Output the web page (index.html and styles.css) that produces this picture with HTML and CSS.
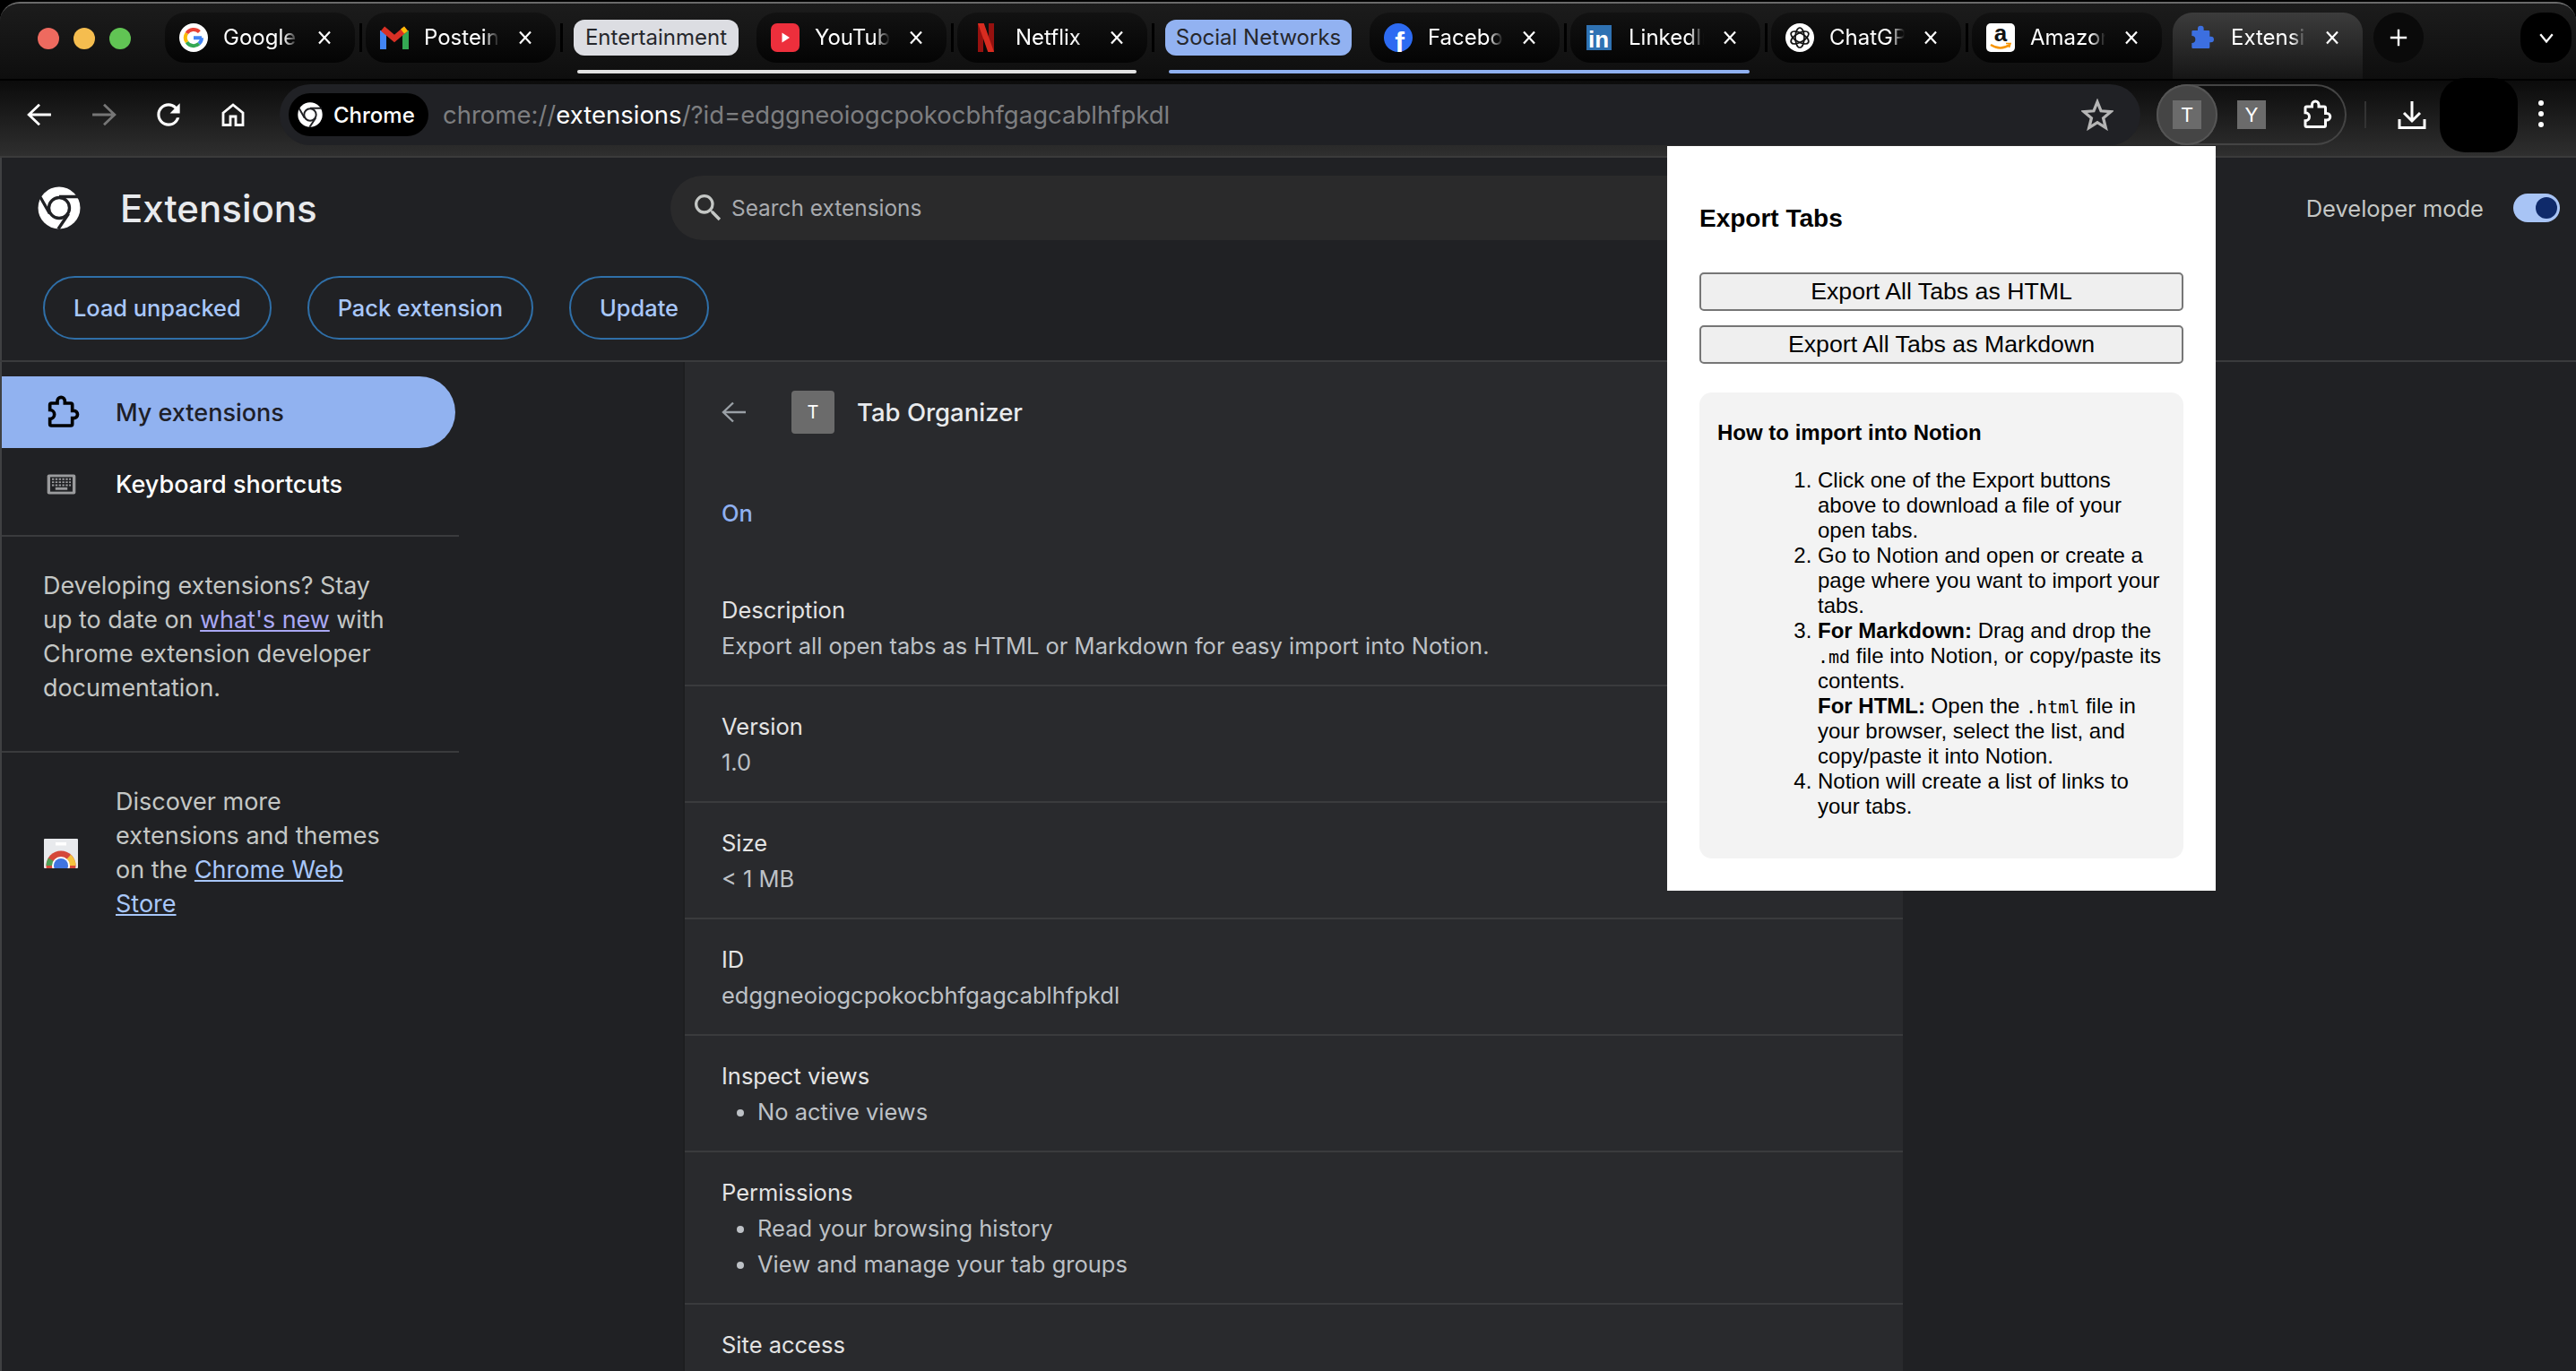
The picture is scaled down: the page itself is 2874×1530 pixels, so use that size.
FILE: index.html
```html
<!DOCTYPE html>
<html>
<head>
    <meta charset="utf-8">
    <title>Extensions</title>
    <link rel="stylesheet" href="styles.css">
</head>
<body>

<!-- shared icons -->
<svg class="sprite">
    <symbol id="i-x" viewBox="0 0 16 16"><path d="M2 1.5 14 14.5M14 1.5 2 14.5" fill="none" stroke="currentColor" stroke-width="2.2"/></symbol>
    <symbol id="i-puzzle" viewBox="0 0 24 24"><path d="M5 6H9V4.5a2.5 2.5 0 0 1 5 0V6h4a1 1 0 0 1 1 1v4h1a2.5 2.5 0 0 1 0 5h-1v4a1 1 0 0 1-1 1H5a1 1 0 0 1-1-1v-3.5a3 3 0 0 0 0-6V7a1 1 0 0 1 1-1z"/></symbol>
    <symbol id="i-chrome" viewBox="0 0 48 48">
        <circle cx="24" cy="24" r="23.5" fill="#fff"/>
        <circle cx="24" cy="24" r="11.5" fill="#fff" stroke="#202124" stroke-width="3.4"/>
        <path d="M24 11.5H46M13.5 30.5 3 12M34.5 30.5 23 47.5" fill="none" stroke="#202124" stroke-width="3.4"/>
    </symbol>
</svg>

<div class="window">

    <!-- TAB STRIP -->
    <div class="tabstrip">
        <div class="lights">
            <span class="light red"></span><span class="light yellow"></span><span class="light green"></span>
        </div>

        <div class="tab">
            <svg class="favicon" viewBox="0 0 32 32">
                <circle cx="16" cy="16" r="16" fill="#fff"/>
                <path d="M16 16.2H25" stroke="#4285f4" stroke-width="4" fill="none"/>
                <path d="M25 16.2a9 9 0 0 1-3 6.6" stroke="#4285f4" stroke-width="4" fill="none"/>
                <path d="M22 22.8A9 9 0 0 1 8.4 21" stroke="#34a853" stroke-width="4" fill="none"/>
                <path d="M8.4 21a9 9 0 0 1 0-10" stroke="#fbbc05" stroke-width="4" fill="none"/>
                <path d="M8.4 11A9 9 0 0 1 22.4 9.6" stroke="#ea4335" stroke-width="4" fill="none"/>
            </svg>
            <span class="tab-title">Google</span>
            <svg class="close"><use href="#i-x"/></svg>
        </div>
        <div class="sep"></div>
        <div class="tab">
            <svg class="favicon" viewBox="0 0 32 32">
                <path d="M3.5 29V8" stroke="#4285f4" stroke-width="7" fill="none"/>
                <path d="M28.5 29V8" stroke="#34a853" stroke-width="7" fill="none"/>
                <path d="M3 6 16 17 29 6" stroke="#d93025" stroke-width="6.5" fill="none"/>
                <path d="M25 9 29 6" stroke="#fbbc05" stroke-width="6.5" fill="none"/>
            </svg>
            <span class="tab-title">Posteingang</span>
            <svg class="close"><use href="#i-x"/></svg>
        </div>
        <div class="sep"></div>

        <!-- group: Entertainment -->
        <div class="group group-white">
            <div class="chip chip-white">Entertainment</div>
            <div class="tab">
                <svg class="favicon" viewBox="0 0 32 32">
                    <rect width="32" height="32" rx="7" fill="#ed2f3c"/>
                    <path d="M12.500 10.500 21 16l-8.500 5.500z" fill="#fff"/>
                </svg>
                <span class="tab-title">YouTube</span>
                <svg class="close"><use href="#i-x"/></svg>
            </div>
            <div class="sep"></div>
            <div class="tab">
                <svg class="favicon" viewBox="0 0 32 32">
                    <rect x="7" width="6" height="32" fill="#96110f"/>
                    <rect x="19" width="6" height="32" fill="#96110f"/>
                    <line x1="10" y1="-1" x2="22" y2="33" stroke="#d92c20" stroke-width="6.400"/>
                </svg>
                <span class="tab-title">Netflix</span>
                <svg class="close"><use href="#i-x"/></svg>
            </div>
            <div class="sep"></div>
        </div>

        <!-- group: Social Networks -->
        <div class="group group-blue">
            <div class="chip chip-blue">Social Networks</div>
            <div class="tab">
                <svg class="favicon" viewBox="0 0 32 32">
                    <circle cx="16" cy="16" r="16" fill="#2d6bf2"/>
                    <text x="17.500" y="32" class="fb-f">f</text>
                </svg>
                <span class="tab-title">Facebook</span>
                <svg class="close"><use href="#i-x"/></svg>
            </div>
            <div class="sep"></div>
            <div class="tab">
                <svg class="favicon" viewBox="0 0 32 32">
                    <rect x="2" y="2" width="28" height="28" fill="#2f72b3"/>
                    <text x="15.500" y="27" class="li-in">in</text>
                </svg>
                <span class="tab-title">LinkedIn</span>
                <svg class="close"><use href="#i-x"/></svg>
            </div>
            <div class="sep"></div>
        </div>

        <div class="tab">
            <svg class="favicon" viewBox="0 0 32 32">
                <circle cx="16" cy="16" r="16" fill="#fff"/>
                <g fill="none" stroke="#111" stroke-width="1.700">
                    <ellipse cx="16" cy="16" rx="5" ry="11"/>
                    <ellipse cx="16" cy="16" rx="5" ry="11" transform="rotate(60 16 16)"/>
                    <ellipse cx="16" cy="16" rx="5" ry="11" transform="rotate(120 16 16)"/>
                </g>
            </svg>
            <span class="tab-title">ChatGPT</span>
            <svg class="close"><use href="#i-x"/></svg>
        </div>
        <div class="sep"></div>
        <div class="tab">
            <svg class="favicon" viewBox="0 0 32 32">
                <rect width="32" height="32" rx="5" fill="#fff"/>
                <text x="16" y="20" class="amz-a">a</text>
                <path d="M5 24q11 7 21 0" fill="none" stroke="#f79400" stroke-width="2.400"/>
                <path d="M22 22.500 27 22.500 25.500 27" fill="none" stroke="#f79400" stroke-width="1.600"/>
            </svg>
            <span class="tab-title">Amazon</span>
            <svg class="close"><use href="#i-x"/></svg>
        </div>

        <div class="tab tab-active">
            <svg class="favicon favicon-puzzle" viewBox="0 0 24 24"><use href="#i-puzzle"/></svg>
            <span class="tab-title">Extensions</span>
            <svg class="close"><use href="#i-x"/></svg>
        </div>

        <div class="newtab">
            <svg viewBox="0 0 24 24"><path d="M12 2V22M2 12H22" stroke="#fff" stroke-width="2.600" fill="none"/></svg>
        </div>
        <div class="tabsearch">
            <svg viewBox="0 0 24 24"><path d="M3 7 12 18 21 7" stroke="#fff" stroke-width="3" fill="none"/></svg>
        </div>
    </div>

    <!-- TOOLBAR -->
    <div class="toolbar">
        <div class="navbtn">
            <svg viewBox="0 0 26 24"><path d="M25 12H3M13 1.500 2 12 13 22.500" fill="none" stroke="#fff" stroke-width="2.600"/></svg>
        </div>
        <div class="navbtn">
            <svg viewBox="0 0 26 24"><path d="M1 12H23M13 1.500 24 12 13 22.500" fill="none" stroke="#767676" stroke-width="2.600"/></svg>
        </div>
        <div class="navbtn">
            <svg class="reload" viewBox="0 0 24 24"><path fill="#fff" d="M17.650 6.350A7.958 7.958 0 0 0 12 4c-4.420 0-7.990 3.580-7.990 8s3.570 8 7.990 8c3.730 0 6.840-2.550 7.730-6h-2.080A5.990 5.990 0 0 1 12 18c-3.310 0-6-2.690-6-6s2.690-6 6-6c1.660 0 3.140.690 4.220 1.780L13 11h7V4l-2.350 2.350z"/></svg>
        </div>
        <div class="navbtn">
            <svg viewBox="0 0 26 26"><path d="M2 11 13 2 24 11V24.500H16V15H10V24.500H2Z" fill="none" stroke="#fff" stroke-width="2.800"/></svg>
        </div>

        <div class="omnibox">
            <div class="chrome-chip">
                <svg viewBox="0 0 48 48"><use href="#i-chrome"/></svg>
                <span>Chrome</span>
            </div>
            <div class="url">chrome://<span class="url-host">extensions</span>/?id=edggneoiogcpokocbhfgagcablhfpkdl</div>
            <svg class="star" viewBox="0 0 24 24"><path d="M12 2.500 14.700 9.200 22 9.800 16.400 14.500 18.200 21.700 12 17.800 5.800 21.700 7.600 14.500 2 9.800 9.300 9.200Z" fill="none" stroke="#b5b5b5" stroke-width="2.200"/></svg>
        </div>

        <div class="extpill">
            <div class="extslot extslot-on"><span class="ext-letter">T</span></div>
            <div class="extslot"><span class="ext-letter">Y</span></div>
            <div class="extslot">
                <svg class="ext-puzzle" viewBox="0 0 24 24"><use href="#i-puzzle"/></svg>
            </div>
        </div>
        <div class="tool-sep"></div>
        <svg class="download" viewBox="0 0 32 32"><path d="M16 1V22M7 14 16 23 25 14M2 21V30.500H30V21" fill="none" stroke="#fff" stroke-width="3"/></svg>
        <div class="avatar"></div>
        <div class="kebab"><span></span><span></span><span></span></div>
    </div>

    <!-- PAGE -->
    <div class="page">
        <div class="header">
            <div class="header-top">
                <div class="brand">
                    <svg class="brand-logo" viewBox="0 0 48 48"><use href="#i-chrome"/></svg>
                    <h1>Extensions</h1>
                </div>
                <div class="searchbox">
                    <svg viewBox="0 0 24 24"><path fill="#c4c7c5" d="M15.500 14h-.790l-.280-.270A6.471 6.471 0 0 0 16 9.500 6.500 6.500 0 1 0 9.500 16c1.610 0 3.090-.590 4.230-1.570l.270.280v.790l5 4.990L20.490 19l-4.990-5zm-6 0C7.010 14 5 11.990 5 9.500S7.010 5 9.500 5 14 7.010 14 9.500 11.990 14 9.500 14z"/></svg>
                    <span>Search extensions</span>
                </div>
                <div class="devmode">
                    <span>Developer mode</span>
                    <div class="toggle"><div class="toggle-knob"></div></div>
                </div>
            </div>
            <div class="header-actions">
                <button class="action">Load unpacked</button>
                <button class="action">Pack extension</button>
                <button class="action">Update</button>
            </div>
        </div>

        <div class="content">
            <div class="sidebar">
                <div class="side-item side-item-on">
                    <svg class="side-puzzle" viewBox="0 0 24 24"><use href="#i-puzzle"/></svg>
                    My extensions
                </div>
                <div class="side-item">
                    <svg class="side-keys" viewBox="0 0 34 24">
                        <rect x="0.500" y="0.500" width="33" height="23" rx="2" fill="#9a9b9d"/>
                        <rect x="4" y="3.500" width="26" height="17" fill="#202124"/>
                        <path d="M6 6H28M6 9.500H28M6 13H28" stroke="#9a9b9d" stroke-width="2" stroke-dasharray="2.500 1.500"/>
                        <rect x="10" y="15.500" width="14" height="3" fill="#9a9b9d"/>
                    </svg>
                    Keyboard shortcuts
                </div>
                <div class="side-note">
                    Developing extensions? Stay<br>up to date on <a class="link-visited" href="#">what's new</a> with Chrome extension developer documentation.
                </div>
                <div class="side-promo">
                    <svg class="store-icon" viewBox="0 0 38 33">
                        <rect width="38" height="33" rx="1" fill="#e8eaed"/>
                        <rect x="13" y="4" width="12" height="3.500" fill="#fff"/>
                        <clipPath id="storeclip"><rect width="38" height="33"/></clipPath>
                        <g clip-path="url(#storeclip)">
                            <circle cx="19" cy="30" r="16.500" fill="#d5483a"/>
                            <path d="M19 30H35.500A16.500 16.500 0 0 0 30 17.700Z" fill="#f4c33f"/>
                            <path d="M19 30H2.500A16.500 16.500 0 0 1 5 21.500Z" fill="#4e9f54"/>
                            <circle cx="19" cy="30" r="10" fill="#fff"/>
                            <circle cx="19" cy="30" r="8" fill="#3f74e0"/>
                        </g>
                    </svg>
                    <div class="promo-text">Discover more extensions and themes on the <a href="#">Chrome Web Store</a></div>
                </div>
            </div>

            <div class="detail">
                <div class="detail-head">
                    <svg class="detail-back" viewBox="0 0 28 24"><path d="M27 12H3M13 1.500 2 12 13 22.500" fill="none" stroke="#9aa0a6" stroke-width="2.400"/></svg>
                    <div class="detail-icon">T</div>
                    <div class="detail-name">Tab Organizer</div>
                </div>
                <div class="detail-on">On</div>
                <div class="section">
                    <div class="label">Description</div>
                    <div class="value">Export all open tabs as HTML or Markdown for easy import into Notion.</div>
                </div>
                <div class="section">
                    <div class="label">Version</div>
                    <div class="value">1.0</div>
                </div>
                <div class="section">
                    <div class="label">Size</div>
                    <div class="value">&lt; 1 MB</div>
                </div>
                <div class="section">
                    <div class="label">ID</div>
                    <div class="value">edggneoiogcpokocbhfgagcablhfpkdl</div>
                </div>
                <div class="section">
                    <div class="label">Inspect views</div>
                    <ul class="value-list"><li>No active views</li></ul>
                </div>
                <div class="section">
                    <div class="label">Permissions</div>
                    <ul class="value-list">
                        <li>Read your browsing history</li>
                        <li>View and manage your tab groups</li>
                    </ul>
                </div>
                <div class="section section-last">
                    <div class="label">Site access</div>
                </div>
            </div>
        </div>
    </div>

    <!-- extension popup, hangs over the page -->
    <div class="popup">
        <h2>Export Tabs</h2>
        <button class="popup-btn">Export All Tabs as HTML</button>
        <button class="popup-btn">Export All Tabs as Markdown</button>
        <div class="howto">
            <h3>How to import into Notion</h3>
            <ol>
                <li>Click one of the Export buttons above to download a file of your open tabs.</li>
                <li>Go to Notion and open or create a page where you want to import your tabs.</li>
                <li><b>For Markdown:</b> Drag and drop the <code>.md</code> file into Notion, or copy/paste its contents.<br>
                    <b>For HTML:</b> Open the <code>.html</code> file in your browser, select the list, and copy/paste it into Notion.</li>
                <li>Notion will create a list of links to your tabs.</li>
            </ol>
        </div>
    </div>

</div>
</body>
</html>
```

FILE: styles.css
```css
/* GLOBAL */
html, body  { margin: 0; padding: 0; background: #000; overflow: hidden; }
body        { padding-top: 2px; height: 1528px; font-family: Inter, "Liberation Sans", sans-serif; color: #e8eaed; }
.sprite     { display: none; }
button      { font-family: inherit; }

.window     { position: relative; height: 1528px; box-sizing: border-box; border-top: 2px solid #6a6a6a;
              border-radius: 22px 22px 0 0; overflow: hidden; background: #202124; }

/* TAB STRIP */
.tabstrip   { display: flex; align-items: flex-start; height: 84px; box-sizing: border-box; padding-top: 10px;
              background: linear-gradient(#1c1c1c, #0e0e0e); }
.lights     { display: flex; gap: 16px; width: 184px; box-sizing: border-box; padding: 17px 0 0 42px; }
.light      { width: 24px; height: 24px; border-radius: 50%; }
.red        { background: #ee6a5f; }
.yellow     { background: #f5bd4f; }
.green      { background: #61c454; }

.tab        { display: flex; align-items: center; width: 212px; height: 56px; box-sizing: border-box; padding-left: 16px;
              border-radius: 22px; background: linear-gradient(#121212, #040404); color: #fff; flex-shrink: 0; }
.tab-active { height: 74px; border-radius: 22px 22px 0 0; background: linear-gradient(#3c3c3c, #161616); align-items: flex-start;
              margin-left: 12px; padding-top: 12px; }
.favicon    { width: 32px; height: 32px; flex-shrink: 0; }
.favicon-puzzle { fill: #3c6fe0; }
.fb-f       { font: bold 32px "Liberation Sans", sans-serif; fill: #fff; text-anchor: middle; }
.li-in      { font: bold 26px "Liberation Sans", sans-serif; fill: #fff; text-anchor: middle; }
.amz-a      { font: bold 26px "Liberation Sans", sans-serif; fill: #111; text-anchor: middle; }
.tab-title  { width: 84px; margin-left: 17px; font-size: 24px; line-height: 32px; white-space: nowrap; overflow: hidden;
              -webkit-mask-image: linear-gradient(to right, #000 80%, transparent 100%);
              mask-image: linear-gradient(to right, #000 80%, transparent 100%); }
.close      { width: 16px; height: 16px; margin-left: 21px; margin-top: 0; color: #fff; flex-shrink: 0; }
.tab-active .close { margin-top: 8px; }
.sep        { width: 3px; height: 32px; margin: 12px 4px 0 5px; background: #000; flex-shrink: 0; }

.group      { position: relative; display: flex; align-items: flex-start; margin-left: 8px; height: 72px; }
.group::after { content: ""; position: absolute; left: 4px; right: 24px; top: 64px; height: 4px; border-radius: 2px; }
.group-white::after { background: #e3e3e3; }
.group-blue::after  { background: #8fb0f0; }
.chip       { height: 40px; line-height: 40px; margin: 8px 20px 0 0; border-radius: 12px; font-size: 24px; color: #26272c; text-align: center; }
.chip-white { width: 184px; background: #dcdde2; }
.chip-blue  { width: 208px; background: #92b2f1; }

.newtab     { display: flex; align-items: center; justify-content: center; width: 56px; height: 56px; margin-left: 12px;
              border-radius: 50%; background: #0a0a0a; }
.newtab svg { width: 22px; height: 22px; }
.tabsearch  { display: flex; align-items: center; justify-content: center; width: 57px; height: 56px; margin-left: auto; margin-right: 5px;
              border-radius: 24px; background: #000; }
.tabsearch svg { width: 18px; height: 18px; }

/* TOOLBAR */
.toolbar    { position: relative; display: flex; align-items: center; height: 68px; padding: 4px 0 12px 8px; box-sizing: content-box;
              background: linear-gradient(#0b0b0b, #2f2f2f); border-top: 2px solid #000; border-bottom: 2px solid #3b3b3b; }
.navbtn     { display: flex; align-items: center; justify-content: center; width: 72px; height: 68px; }
.navbtn svg { width: 28px; height: 26px; }
.navbtn .reload { width: 38px; height: 38px; }

.omnibox    { display: flex; align-items: center; width: 2076px; height: 68px; margin-left: 16px; box-sizing: border-box;
              padding-left: 10px; border-radius: 34px; background: #202125; }
.chrome-chip { display: flex; align-items: center; gap: 12px; width: 156px; height: 48px; box-sizing: border-box; padding-left: 10px;
               border-radius: 24px; background: #000; color: #fff; font-size: 24px; font-weight: 500; }
.chrome-chip svg { width: 28px; height: 28px; }
.url        { margin-left: 16px; font-size: 27.5px; color: #7d7e80; white-space: nowrap; }
.url-host   { color: #fff; }
.star       { width: 36px; height: 36px; margin-left: auto; margin-right: 30px; }

.extpill    { display: flex; gap: 4px; width: 212px; height: 68px; margin-left: 18px; box-sizing: border-box;
              border-radius: 34px; box-shadow: inset 0 0 0 2px #444; }
.extslot    { display: flex; align-items: center; justify-content: center; width: 68px; height: 68px; border-radius: 50%; }
.extslot-on { background: #454545; box-shadow: inset 0 0 0 2px #555; }
.ext-letter { width: 32px; height: 32px; line-height: 32px; background: #6b6b6b; color: #fff; font-size: 22px; text-align: center; }
.ext-puzzle { width: 36px; height: 36px; fill: none; stroke: #fff; stroke-width: 2; }
.tool-sep   { width: 2px; height: 30px; margin-left: 20px; background: #333; }
.download   { width: 32px; height: 32px; margin-left: 35px; }
.avatar     { width: 87px; height: 83px; margin: 0 0 0 15px; border-radius: 28px; background: #000; flex-shrink: 0; }
.kebab      { display: flex; flex-direction: column; gap: 6px; margin-left: 23px; margin-top: -2px; }
.kebab span { display: block; width: 6px; height: 6px; border-radius: 50%; background: #fff; }

/* PAGE HEADER */
.page       { background: #202124; box-shadow: inset 2px 0 0 #3f4042; height: 1354px; }
.header     { padding-top: 20px; border-bottom: 2px solid #3a3b3d; height: 206px; box-sizing: content-box; }
.header-top { display: flex; align-items: center; height: 72px; }
.brand      { display: flex; align-items: center; width: 748px; box-sizing: border-box; padding-left: 42px; flex-shrink: 0; }
.brand-logo { width: 48px; height: 48px; }
h1          { margin: 0 0 0 44px; font-size: 42px; font-weight: 500; color: #e8eaed; }
.searchbox  { display: flex; align-items: center; gap: 18px; width: 1200px; height: 72px; box-sizing: border-box; padding-left: 22px;
              border-radius: 36px; background: #2a2a2b; font-size: 24.4px; color: #a8abaf; flex-shrink: 0; }
.searchbox svg { width: 40px; height: 40px; margin-right: -12px; }
.devmode    { display: flex; align-items: center; margin-left: auto; padding-right: 18px; font-size: 25.5px; color: #c4c7c5; }
.toggle     { display: flex; align-items: center; justify-content: flex-end; width: 52px; height: 32px; margin-left: 33px; padding-right: 3px;
              box-sizing: border-box; border-radius: 16px; background: #a8c4f5; }
.toggle-knob { width: 24px; height: 24px; border-radius: 50%; background: #0f2a6a; }

.header-actions { display: flex; padding: 40px 0 0 48px; }
.action     { height: 71px; padding: 0 32px; margin-right: 40px; border: 2px solid #2f6fa8; border-radius: 36px; background: transparent;
              color: #a8c7fa; font-size: 25.4px; font-weight: 500; }

/* BODY: SIDEBAR + DETAIL */
.content    { display: flex; }
.sidebar    { width: 762px; margin-left: 2px; padding-top: 16px; box-sizing: border-box; flex-shrink: 0; }
.side-item  { display: flex; align-items: center; width: 506px; height: 80px; box-sizing: border-box; padding-left: 47px;
              font-size: 27px; font-weight: 500; color: #fff; }
.side-item-on { background: #91b2f0; border-radius: 0 40px 40px 0; color: #1e2028; }
.side-puzzle { width: 40px; height: 40px; margin-right: 40px; fill: none; stroke: #000; stroke-width: 2.200; }
.side-keys  { width: 33px; height: 23px; margin: 0 44px 0 3px; }
.side-note  { width: 510px; box-sizing: border-box; margin-top: 17px; padding: 35px 50px 52px 46px; border-top: 2px solid #3a3b3d;
              border-bottom: 2px solid #3a3b3d; font-size: 26.9px; line-height: 38px; color: #c4c7c5; }
.side-promo { display: flex; align-items: center; padding: 36px 0 0 47px; }
.store-icon { width: 38px; height: 33px; margin-right: 42px; flex-shrink: 0; }
.promo-text { width: 320px; font-size: 27px; line-height: 38px; color: #c4c7c5; }
a           { color: #a8c7fa; }
.link-visited { color: #aaa8f4; }

.detail     { width: 1359px; height: 1200px; box-sizing: border-box; padding-left: 41px; background: #292a2d; box-shadow: -2px 0 0 #1d1e20; }
.detail-head { display: flex; align-items: center; padding-top: 32px; height: 48px; }
.detail-back { width: 28px; height: 24px; }
.detail-icon { width: 48px; height: 48px; line-height: 48px; margin-left: 50px; border-radius: 4px; background: #6b6b6b; color: #fff; font-size: 20px; text-align: center; }
.detail-name { margin-left: 25px; font-size: 27.5px; font-weight: 500; color: #e8eaed; }
.detail-on  { margin: 69px 0 43px; line-height: 40px; font-size: 25.5px; font-weight: 500; color: #8fb0f0; }

.section    { margin-left: -41px; padding: 25px 0 23px 41px; border-bottom: 2px solid #3a3b3d; font-size: 25.5px; line-height: 40px; }
.section-last { border-bottom: none; }
.label      { color: #e3e3e3; }
.value      { color: #bdc1c6; }
.value-list { margin: 0; padding: 0 0 0 40px; color: #bdc1c6; }

/* EXTENSION POPUP */
.popup      { position: absolute; left: 1860px; top: 159px; width: 612px; height: 831px; box-sizing: border-box; padding: 65px 36px 0;
              background: #fff; color: #000; font-family: "Liberation Sans", Arial, sans-serif; }
.popup h2   { margin: 0 0 44px; font-size: 28px; line-height: 32px; font-weight: 700; }
.popup-btn  { display: block; width: 100%; height: 43px; margin-bottom: 16px; padding: 0; box-sizing: border-box; border: 2px solid #767676;
              border-radius: 5px; background: #efefef; color: #000; font-family: inherit; font-size: 26.7px; }
.howto      { margin-top: 32px; height: 520px; box-sizing: border-box; padding: 30px 20px 0; border-radius: 14px; background: #f3f3f3; }
.howto h3   { margin: 0 0 24px; font-size: 24px; line-height: 30px; font-weight: 700; }
.howto ol   { margin: 0; padding-left: 112px; font-size: 24px; line-height: 28px; }
.howto code { font-family: "DejaVu Sans Mono", monospace; font-size: 20px; line-height: 1; }
```
